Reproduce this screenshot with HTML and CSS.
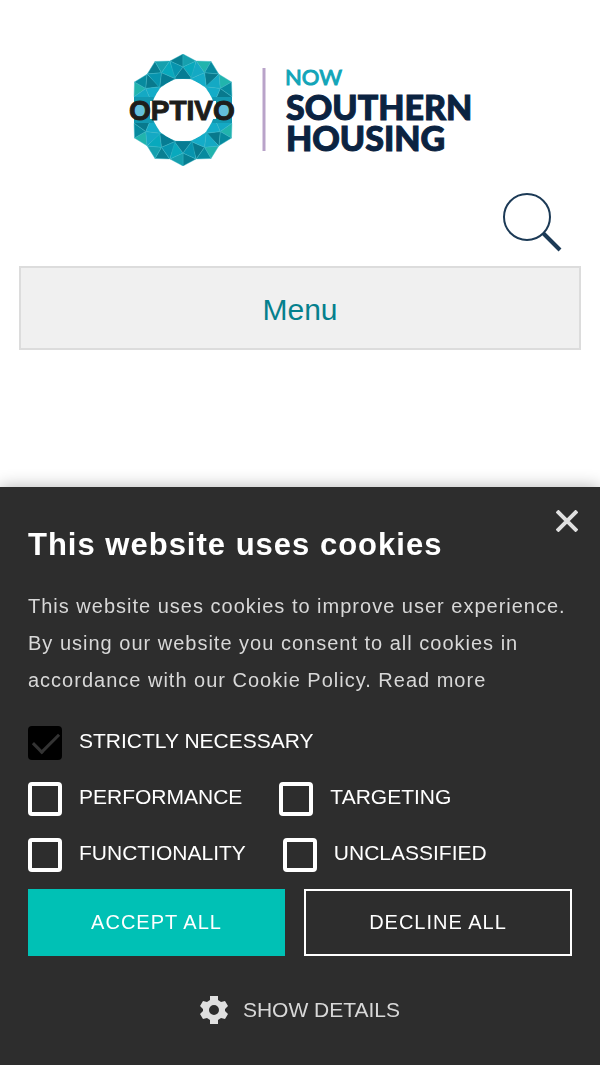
FILE: index.html
```
<!DOCTYPE html>
<html lang="en">
  <head>
    <meta charset="UTF-8" />
    <meta name="viewport" content="width=device-width, initial-scale=1.0" />
    <title>Optivo - now Southern Housing</title>
    <link rel="stylesheet" href="styles.css">
  </head>
  <body>
    <header class="header">
      <a href="#" class="logo" aria-label="Optivo, now Southern Housing">
        <svg viewBox="0 0 344 112">
          <defs>
            <!-- one twelfth of the ring, pointing up -->
            <g id="gem-a">
              <path fill="#087f92" d="M-13-49 0-56 0-43z" />
              <path fill="#16a0ae" d="M0-56 13-49 0-43z" />
              <path fill="#0794ae" d="M-13-49 0-43-9-31z" />
              <path fill="#08a9bd" d="M13-49 0-43 9-31z" />
              <path fill="#067c93" d="M0-43-9-31 9-31z" />
            </g>
            <g id="gem-b">
              <path fill="#21b4ad" d="M-13-49 0-56 0-43z" />
              <path fill="#078a9e" d="M0-56 13-49 0-43z" />
              <path fill="#14a9c4" d="M-13-49 0-43-9-31z" />
              <path fill="#08798d" d="M13-49 0-43 9-31z" />
              <path fill="#14acc8" d="M0-43-9-31 9-31z" />
            </g>
          </defs>
          <g transform="translate(55 56)" stroke="#38b6c6" stroke-width=".4">
            <use href="#gem-a" />
            <use href="#gem-b" transform="rotate(30)" />
            <use href="#gem-b" transform="rotate(60)" />
            <use href="#gem-b" transform="rotate(120)" />
            <use href="#gem-b" transform="rotate(150)" />
            <use href="#gem-a" transform="rotate(180)" />
            <use href="#gem-a" transform="rotate(210)" />
            <use href="#gem-b" transform="rotate(240)" />
            <use href="#gem-b" transform="rotate(300)" />
            <use href="#gem-a" transform="rotate(330)" />
          </g>
          <circle cx="55" cy="56" r="31" fill="#fff" />
          <path fill="#1298b0" d="M6 43h20l-4 13 4 13H6zM104 43H84l4 13-4 13h20z" />
          <path fill="#fff" d="M22 47h66v18H22z" />
          <circle cx="12" cy="56" r="9" fill="#63bfdb" />
          <circle cx="97" cy="56" r="9" fill="#63bfdb" />
          <text x="1" y="66" class="logo-optivo">OPTIVO</text>
          <path d="M136 14v83" stroke="#b9a3c9" stroke-width="3" />
          <text x="157" y="31" class="logo-now">NOW</text>
          <text x="158" y="66" class="logo-name">SOUTHERN</text>
          <text x="158" y="97" class="logo-name">HOUSING</text>
        </svg>
      </a>
      <button class="search" aria-label="Search">
        <svg viewBox="0 0 60 60" fill="none" stroke="#1c3a56">
          <circle cx="25" cy="25" r="23" stroke-width="2" />
          <path d="M41 41l17 17" stroke-width="4" />
        </svg>
      </button>
      <button class="menu">Menu</button>
    </header>

    <section class="cookies" aria-label="Cookie consent">
      <button class="close" aria-label="Close">
        <svg viewBox="0 0 22 22" fill="none" stroke="#e0e0e0" stroke-width="4">
          <path d="M1 1l20 20M21 1L1 21" />
        </svg>
      </button>
      <h2>This website uses cookies</h2>
      <p>
        This website uses cookies to improve user experience. By using our
        website you consent to all cookies in accordance with our Cookie Policy.
        <a href="#">Read more</a>
      </p>
      <div class="options">
        <label class="full"><input type="checkbox" checked disabled />STRICTLY NECESSARY</label>
        <label><input type="checkbox" />PERFORMANCE</label>
        <label><input type="checkbox" />TARGETING</label>
        <label><input type="checkbox" />FUNCTIONALITY</label>
        <label><input type="checkbox" />UNCLASSIFIED</label>
      </div>
      <div class="actions">
        <button class="accept">ACCEPT ALL</button>
        <button class="decline">DECLINE ALL</button>
      </div>
      <button class="details">
        <svg viewBox="0 0 28 28" fill="#e0e0e0">
          <path fill-rule="evenodd" d="M10 0h8v4l3 2 4-1 3 5-3 3v2l3 3-3 5-4-1-3 2v4h-8v-4l-3-2-4 1-3-5 3-3v-2l-3-3 3-5 4 1 3-2zM14 9a5 5 0 1 0 0 10 5 5 0 0 0 0-10z" />
        </svg>
        SHOW DETAILS
      </button>
    </section>
  </body>
</html>
```
FILE: styles.css
```
* {
  margin: 0;
  padding: 0;
  box-sizing: border-box;
}
body {
  background-color: #fff;
  font-family: "Liberation Sans", Arial, sans-serif;
}
button {
  border: none;
  background: none;
  font-family: inherit;
  cursor: pointer;
}
svg {
  display: block;
  width: 100%;
}

.header {
  display: flex;
  flex-direction: column;
  padding: 54px 19px 0;
}
.logo {
  align-self: center;
  width: 344px;
  max-width: 100%;
}
.logo-optivo {
  font-size: 28px;
  font-weight: bold;
  fill: #1d1d1b;
  stroke: #1d1d1b;
  stroke-width: 1px;
}
.logo-now {
  font-family: Lato, sans-serif;
  font-size: 22px;
  fill: #12a5b8;
  stroke: #12a5b8;
  stroke-width: 1px;
}
.logo-name {
  font-family: Lato, sans-serif;
  font-size: 34px;
  font-weight: 900;
  fill: #0b2341;
  stroke: #0b2341;
  stroke-width: 1px;
}
.search {
  align-self: flex-end;
  width: 60px;
  margin: 26px 19px 14px 0;
}
.menu {
  padding: 26px 24px 22px;
  border: 2px solid #dcdcdc;
  background-color: #f0f0f0;
  color: #05808d;
  font-size: 30px;
  line-height: 32px;
}

.cookies {
  position: fixed;
  left: 0;
  right: 0;
  bottom: 0;
  padding: 37px 28px 39px;
  background-color: #2d2d2d;
  box-shadow: 0 0 16px rgba(0, 0, 0, 0.3);
  color: #fff;
}
.close {
  position: absolute;
  top: 23px;
  right: 22px;
  width: 22px;
}
.cookies h2 {
  margin-bottom: 22px;
  font-size: 31px;
  line-height: 42px;
  letter-spacing: 1px;
}
.cookies p {
  margin-bottom: 27px;
  color: #d8d8d8;
  font-size: 20px;
  line-height: 37px;
  letter-spacing: 1px;
}
.cookies a {
  color: inherit;
  text-decoration: none;
}

.options {
  display: flex;
  flex-wrap: wrap;
  gap: 22px 37px;
  margin-bottom: 17px;
}
.options label {
  display: flex;
  gap: 17px;
  font-size: 21px;
  line-height: 30px;
}
.options .full {
  flex-basis: 100%;
}
.options input {
  appearance: none;
  position: relative;
  width: 34px;
  height: 34px;
  border: 4px solid #fff;
  border-radius: 4px;
}
.options input:checked {
  border-color: #000;
  background-color: #000;
}
.options input:checked::after {
  content: "";
  position: absolute;
  left: 1px;
  top: 3px;
  width: 23px;
  height: 11px;
  border: solid #333;
  border-width: 0 0 3px 3px;
  transform: rotate(-45deg);
}

.actions {
  display: flex;
  gap: 19px;
}
.actions button {
  height: 67px;
  color: #fff;
  font-size: 20px;
  letter-spacing: 1px;
}
.actions .accept {
  flex: 257;
  background-color: #00c1b5;
}
.actions .decline {
  flex: 264;
  border: 2px solid #fff;
}
.details {
  display: flex;
  align-items: center;
  gap: 15px;
  margin: 38px auto 0;
  color: #d8d8d8;
  font-size: 21px;
  line-height: 32px;
}
.details svg {
  width: 28px;
}
```
